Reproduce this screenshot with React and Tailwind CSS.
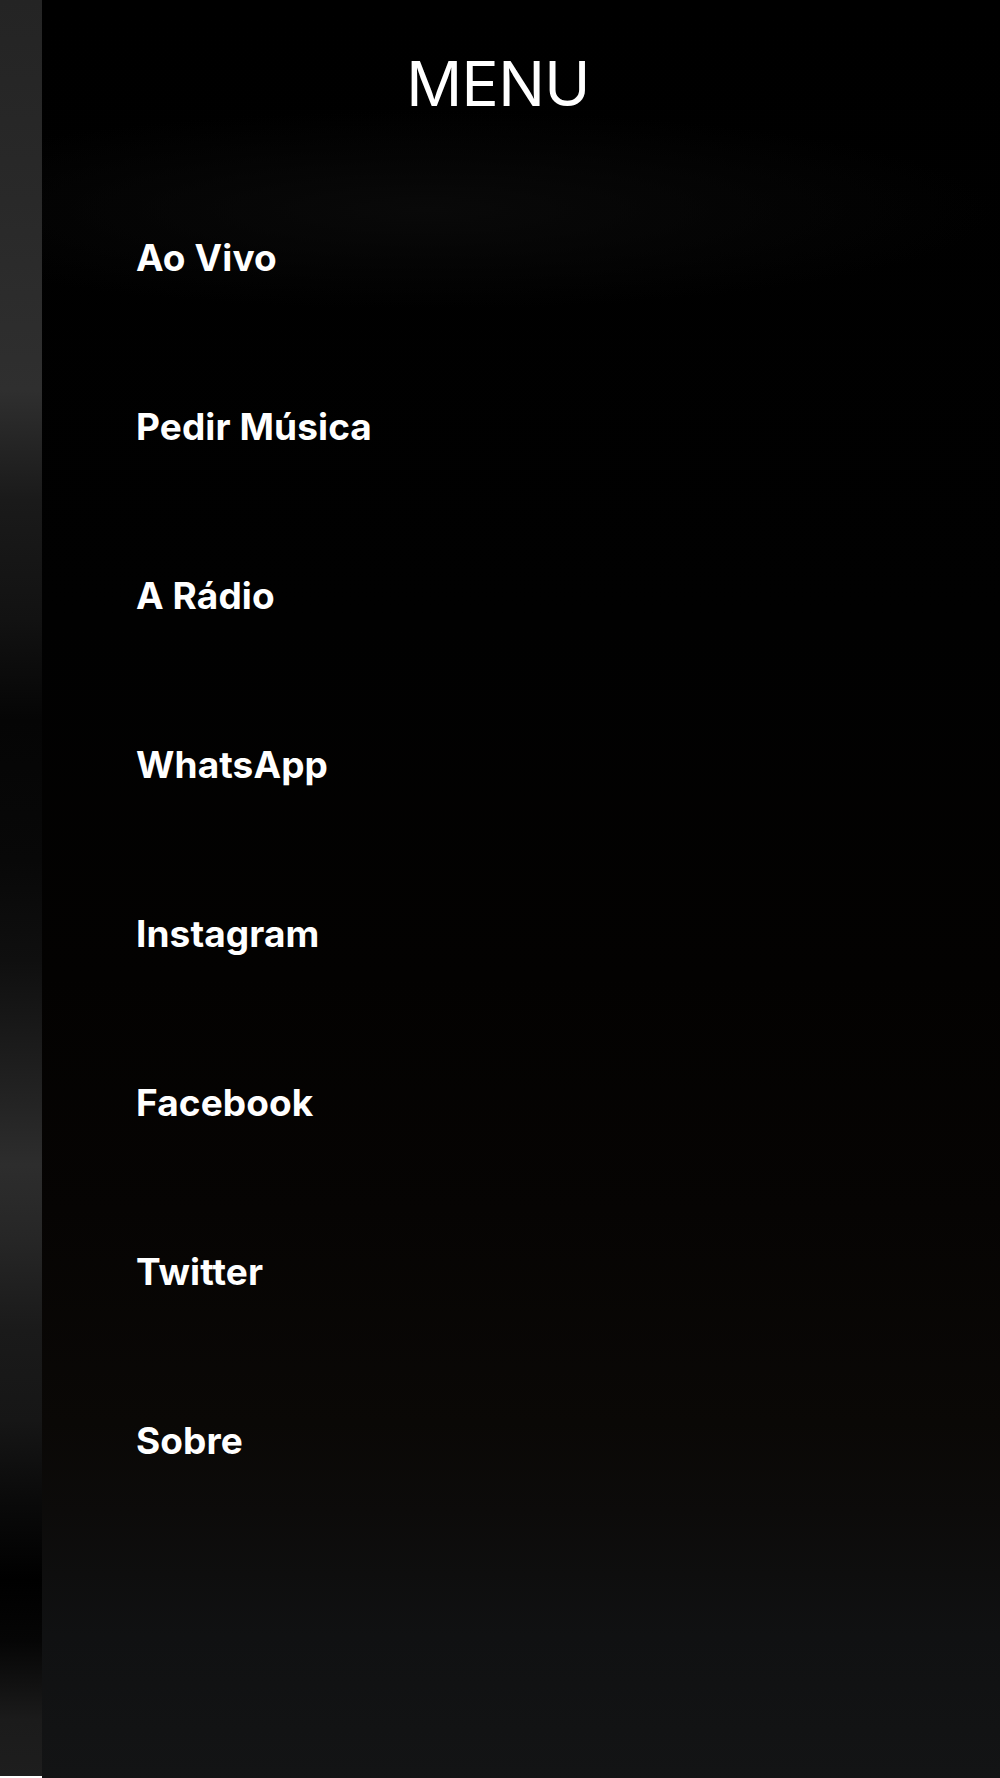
export default function App() {
  const items = [
    "Ao Vivo",
    "Pedir Música",
    "A Rádio",
    "WhatsApp",
    "Instagram",
    "Facebook",
    "Twitter",
    "Sobre",
  ];
  return (
    <div className="flex w-[1000px] h-[1778px] bg-black overflow-hidden">
      <div className="w-[42px] flex flex-col shrink-0">
        <div className="flex-1 bg-[linear-gradient(to_bottom,#242424_0px,#292929_200px,#2f2f2f_390px,#1a1a1a_500px,#121212_620px,#050505_720px,#080808_860px,#0f0f0f_960px,#1d1d1d_1060px,#2d2d2d_1165px,#262626_1240px,#1a1a1a_1330px,#161616_1420px,#0a0a0a_1500px,#000000_1580px,#050505_1640px,#1b1b1b_1720px,#1e1e1e_1776px)]" />
        <div className="h-[2px] bg-white" />
      </div>
      <div className="relative flex-1 flex flex-col bg-[linear-gradient(to_bottom,#000000_0%,#010101_35%,#030201_55%,#060403_68%,#0a0806_80%,#0c0b0a_85%,#101112_92%,#131415_100%)]">
        <div className="pointer-events-none absolute left-0 right-0 top-[110px] h-[200px] bg-[radial-gradient(ellipse_at_40%_50%,rgba(10,10,10,0.9)_0%,rgba(0,0,0,0)_70%)]" />
        <div className="relative pt-[53px] pr-[46px] text-center text-white text-[62px] leading-none font-normal font-['Inter',sans-serif] tracking-[-0.6px]">
          MENU
        </div>
        <nav className="relative mt-[125px] pl-[94px] flex flex-col gap-[133px]">
          {items.map((t) => (
            <a
              key={t}
              className="h-[36px] text-white text-[37px] leading-[36px] font-bold font-['Inter',sans-serif] tracking-[0.1px]"
            >
              {t}
            </a>
          ))}
        </nav>
      </div>
    </div>
  );
}
